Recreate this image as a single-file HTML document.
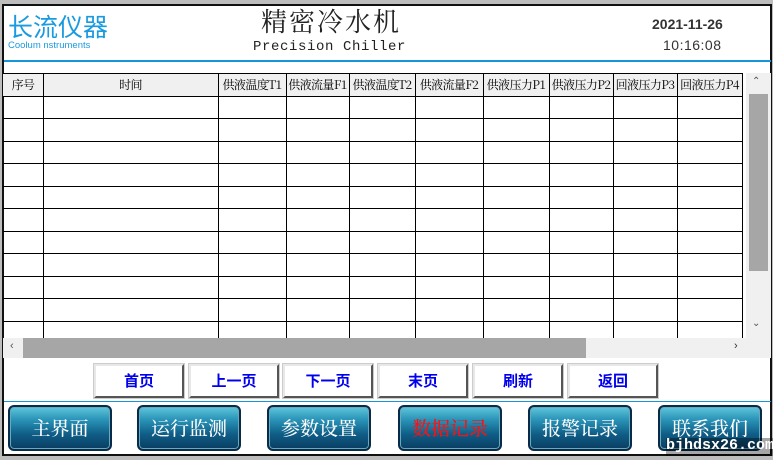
<!DOCTYPE html>
<html><head><meta charset="utf-8"><style>
*{margin:0;padding:0;box-sizing:border-box}
body{width:773px;height:460px;background:#bdbdbd;position:relative;overflow:hidden;font-family:"Liberation Sans","Noto Sans CJK SC",sans-serif}
.a{position:absolute}
#frame{left:2px;top:4px;width:770px;height:452px;background:#fff;border:2px solid #111}
.vl{position:absolute;width:1px;background:#000;top:73px;height:265px}
.hl{position:absolute;height:1px;background:#000;left:3px;width:740px}
.th{position:absolute;top:74px;height:22px;line-height:22px;font-size:12px;text-align:center;font-family:"Noto Serif CJK SC","Liberation Serif",serif;color:#000;white-space:nowrap;letter-spacing:-0.6px}
.nb{position:absolute;top:364px;width:90px;height:34px;background:#fff;border:2px solid;border-color:#e8e8e8 #555 #555 #e8e8e8;box-shadow:0 0 0 1px #ccc;color:#0000ee;font-weight:bold;font-size:15px;text-align:center;line-height:30px;font-family:"Noto Sans CJK SC",sans-serif}
.bb{position:absolute;top:405px;width:104px;height:46px;border-radius:6px;border:2px solid #0a2a4a;background:linear-gradient(#5fc6da 0%,#2a94b8 30%,#0f5d86 65%,#0a3d62 100%);box-shadow:inset 0 0 0 1px #6ab;color:#fff;font-size:19px;font-weight:500;text-align:center;line-height:42px;font-family:"Noto Serif CJK SC",serif}
</style></head><body>
<div class="a" id="frame"></div>
<div class="a" style="left:8px;top:10px;font-size:25px;color:#1a9ae0;font-family:'Noto Sans CJK SC',sans-serif;line-height:32px">长流仪器</div>
<div class="a" style="left:8px;top:40px;font-size:9.5px;color:#1a9ae0">Coolum nstruments</div>
<div class="a" style="left:261px;top:3px;font-size:26px;color:#222;font-family:'Noto Serif CJK SC',serif;line-height:36px;letter-spacing:2px">精密冷水机</div>
<div class="a" style="left:253px;top:39px;font-size:14px;color:#222;font-family:'Liberation Mono',monospace;letter-spacing:0.6px">Precision Chiller</div>
<div class="a" style="left:652px;top:16px;font-size:14px;font-weight:bold;color:#333">2021-11-26</div>
<div class="a" style="left:663px;top:37px;font-size:14px;color:#333;letter-spacing:0.5px">10:16:08</div>
<div class="a" style="left:4px;top:60px;width:767px;height:2px;background:#1596d8"></div>
<div class="a" style="left:3px;top:73px;width:740px;height:23px;background:#f0f0f0"></div>
<div class="hl" style="top:73px"></div>
<div class="hl" style="top:96px"></div><div class="hl" style="top:118px"></div><div class="hl" style="top:141px"></div><div class="hl" style="top:163px"></div><div class="hl" style="top:186px"></div><div class="hl" style="top:208px"></div><div class="hl" style="top:231px"></div><div class="hl" style="top:253px"></div><div class="hl" style="top:276px"></div><div class="hl" style="top:298px"></div><div class="hl" style="top:321px"></div>
<div class="vl" style="left:43px"></div><div class="vl" style="left:218px"></div><div class="vl" style="left:286px"></div><div class="vl" style="left:349px"></div><div class="vl" style="left:415px"></div><div class="vl" style="left:483px"></div><div class="vl" style="left:549px"></div><div class="vl" style="left:613px"></div><div class="vl" style="left:677px"></div><div class="vl" style="left:742px"></div>
<div class="th" style="left:3px;width:40px">序号</div>
<div class="th" style="left:43px;width:175px">时间</div>
<div class="th" style="left:218px;width:68px">供液温度T1</div>
<div class="th" style="left:286px;width:63px">供液流量F1</div>
<div class="th" style="left:349px;width:66px">供液温度T2</div>
<div class="th" style="left:415px;width:68px">供液流量F2</div>
<div class="th" style="left:483px;width:66px">供液压力P1</div>
<div class="th" style="left:549px;width:64px">供液压力P2</div>
<div class="th" style="left:613px;width:64px">回液压力P3</div>
<div class="th" style="left:677px;width:65px">回液压力P4</div>
<div class="a" style="left:746px;top:73px;width:25px;height:265px;background:#f0f0f0"></div>
<div class="a" style="left:749px;top:94px;width:19px;height:177px;background:#a6a6a6"></div>
<div class="a" style="left:752px;top:76px;font-size:10px;color:#555">⌃</div>
<div class="a" style="left:752px;top:318px;font-size:10px;color:#555">⌄</div>
<div class="a" style="left:3px;top:338px;width:768px;height:20px;background:#f0f0f0"></div>
<div class="a" style="left:23px;top:338px;width:563px;height:20px;background:#a6a6a6"></div>
<div class="a" style="left:10px;top:340px;font-size:11px;color:#555">‹</div>
<div class="a" style="left:734px;top:340px;font-size:11px;color:#333">›</div>
<div class="nb" style="left:94px">首页</div>
<div class="nb" style="left:189px">上一页</div>
<div class="nb" style="left:283px">下一页</div>
<div class="nb" style="left:378px">末页</div>
<div class="nb" style="left:473px">刷新</div>
<div class="nb" style="left:568px">返回</div>
<div class="a" style="left:4px;top:401px;width:767px;height:1px;background:#1596d8"></div>
<div class="bb" style="left:8px">主界面</div>
<div class="bb" style="left:137px">运行监测</div>
<div class="bb" style="left:267px">参数设置</div>
<div class="bb" style="left:398px;color:#ff1010">数据记录</div>
<div class="bb" style="left:528px">报警记录</div>
<div class="bb" style="left:658px">联系我们</div>
<div class="a" style="left:666px;top:438px;width:107px;height:18px;background:rgba(0,0,0,0.35)"></div>
<div class="a" style="left:666px;top:437px;font-size:15px;color:#fff;font-family:'Liberation Mono',monospace;font-weight:bold">bjhdsx26.com</div>
</body></html>
